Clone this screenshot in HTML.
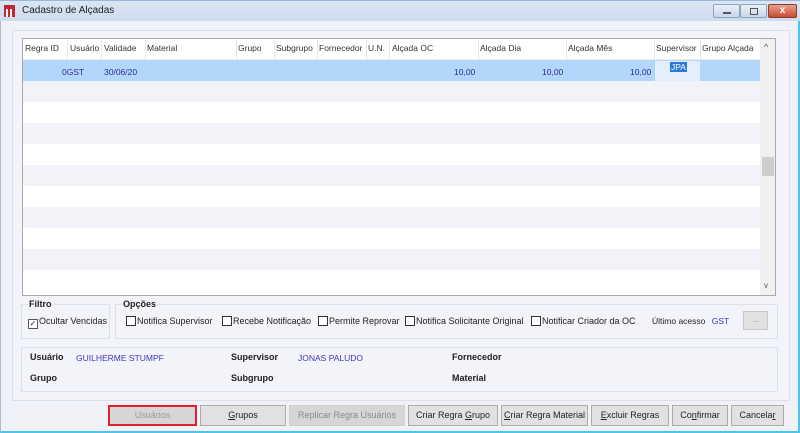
<!DOCTYPE html>
<html><head><meta charset="utf-8"><style>
*{box-sizing:border-box;margin:0;padding:0}
body{width:800px;height:433px;overflow:hidden;background:#f1f2f8;font-family:"Liberation Sans",sans-serif;font-size:9px;color:#222;position:relative}
.abs{position:absolute}
#title{left:0;top:0;width:800px;height:21px;background:linear-gradient(#dbe6f3,#cddbee);border-top:1px solid #9fb6d3}
#win{left:0;top:21px;width:800px;height:412px;border-right:2px solid #4fc3e8;border-bottom:2px solid #4fc3e8;border-left:1px solid #a8bcd6}
.panel{border:1px solid #dde0e8;background:#f3f4f9}
#grid{left:22px;top:38px;width:754px;height:258px;background:#fff;border:1px solid #a9a9a9;overflow:hidden}
.hd{position:absolute;top:4px;font-size:8.5px;color:#333}
.vs{position:absolute;top:0;height:21px;width:1px;background:#e6e6e6}
.row{position:absolute;left:0;width:738px;height:21px}
.t{position:absolute;font-size:8.5px}
.btn{position:absolute;top:405px;height:21px;background:#e1e1e1;border:1px solid #adadad;text-align:center;line-height:19px;font-size:9px;color:#222}
.cb{display:inline-block;width:10px;height:10px;border:1px solid #333;background:#fff;vertical-align:-2px;margin-right:1px}
.lb{position:absolute;font-weight:bold;font-size:9px}
.bl{position:absolute;color:#3a3ac0;font-size:8.5px}
</style></head><body>
<div id="title" class="abs">
 <div class="abs" style="left:4px;top:4px;width:11px;height:12px;background:#c0262d"></div>
 <div class="abs" style="left:6px;top:8px;width:2px;height:8px;background:#fff"></div>
 <div class="abs" style="left:10px;top:8px;width:2px;height:8px;background:#fff"></div>
 <div class="abs" style="left:22px;top:4px;font-size:10px;color:#222">Cadastro de Alçadas</div>
 <div class="abs" style="left:713px;top:3px;width:27px;height:14px;border:1px solid #8ea3c0;border-radius:2px;background:linear-gradient(#eaf0f8,#c9d6e8)"><div class="abs" style="left:9px;top:7px;width:8px;height:2px;background:#555"></div></div>
 <div class="abs" style="left:740px;top:3px;width:27px;height:14px;border:1px solid #8ea3c0;border-radius:2px;background:linear-gradient(#eaf0f8,#c9d6e8)"><div class="abs" style="left:9px;top:3px;width:8px;height:7px;border:1px solid #555"></div></div>
 <div class="abs" style="left:768px;top:3px;width:29px;height:14px;border:1px solid #8a3b2d;border-radius:2px;background:linear-gradient(#e9a08e,#c74c32);color:#fff;font-weight:bold;text-align:center;line-height:12px;font-size:10px">x</div>
</div>
<div id="win" class="abs"></div>
<div class="abs panel" style="left:12px;top:30px;width:778px;height:371px;background:#f3f4f9"></div>
<div id="grid" class="abs">
 <div class="row" style="top:0;background:#fff;border-bottom:1px solid #eee"></div>
 <div class="hd" style="left:2px">Regra ID</div>
 <div class="hd" style="left:47px">Usuário</div>
 <div class="hd" style="left:81px">Validade</div>
 <div class="hd" style="left:124px">Material</div>
 <div class="hd" style="left:215px">Grupo</div>
 <div class="hd" style="left:253px">Subgrupo</div>
 <div class="hd" style="left:296px">Fornecedor</div>
 <div class="hd" style="left:345px">U.N.</div>
 <div class="hd" style="left:369px">Alçada OC</div>
 <div class="hd" style="left:457px">Alçada Dia</div>
 <div class="hd" style="left:545px">Alçada Mês</div>
 <div class="hd" style="left:633px">Supervisor</div>
 <div class="hd" style="left:679px">Grupo Alçada</div>
 <div class="vs" style="left:44px"></div><div class="vs" style="left:78px"></div><div class="vs" style="left:122px"></div><div class="vs" style="left:213px"></div><div class="vs" style="left:251px"></div><div class="vs" style="left:294px"></div><div class="vs" style="left:343px"></div><div class="vs" style="left:366px"></div><div class="vs" style="left:455px"></div><div class="vs" style="left:543px"></div><div class="vs" style="left:631px"></div><div class="vs" style="left:677px"></div><div class="vs" style="left:737px"></div>
 <div class="row" style="top:21px;background:#b3d7fb"></div>
 <div class="abs" style="left:632px;top:22px;width:45px;height:20px;background:#e3effb"></div>
 <div class="t" style="left:39px;top:28px;color:#2a2a9a">0GST</div>
 <div class="t" style="left:81px;top:28px;color:#2a2a9a">30/06/20</div>
 <div class="t" style="left:431px;top:28px;color:#2a2a9a">10,00</div>
 <div class="t" style="left:519px;top:28px;color:#2a2a9a">10,00</div>
 <div class="t" style="left:607px;top:28px;color:#2a2a9a">10,00</div>
 <div class="t" style="left:647px;top:23px;background:#2a7ad8;color:#fff;padding:0 1px">JPA</div>
 <div class="row" style="top:42px;background:#f2f3f8"></div>
 <div class="row" style="top:84px;background:#f2f3f8"></div>
 <div class="row" style="top:126px;background:#f2f3f8"></div>
 <div class="row" style="top:168px;background:#f2f3f8"></div>
 <div class="row" style="top:210px;background:#f2f3f8"></div>
 <div class="abs" style="left:737px;top:0;width:16px;height:258px;background:#f0f0f0"></div>
 <div class="abs" style="left:741px;top:3px;font-size:9px;color:#555">^</div>
 <div class="abs" style="left:739px;top:118px;width:12px;height:19px;background:#cdcdcd"></div>
 <div class="abs" style="left:741px;top:242px;font-size:8px;color:#555">v</div>
</div>
<div class="abs panel" style="left:21px;top:304px;width:89px;height:35px"></div>
<div class="abs" style="left:28px;top:299px;font-weight:bold;font-size:9px;background:#f3f4f9;padding:0 1px">Filtro</div>
<div class="abs" style="left:28px;top:316px;font-size:9px"><span class="cb" style="border-color:#555;font-size:8px;line-height:8px;text-align:center">✓</span>Ocultar Vencidas</div>
<div class="abs panel" style="left:115px;top:304px;width:663px;height:35px"></div>
<div class="abs" style="left:122px;top:299px;font-weight:bold;font-size:9px;background:#f3f4f9;padding:0 1px">Opções</div>
<div class="abs" style="left:126px;top:316px;font-size:9px"><span class="cb"></span>Notifica Supervisor</div>
<div class="abs" style="left:222px;top:316px;font-size:9px"><span class="cb"></span>Recebe Notificação</div>
<div class="abs" style="left:318px;top:316px;font-size:9px"><span class="cb"></span>Permite Reprovar</div>
<div class="abs" style="left:405px;top:316px;font-size:9px"><span class="cb"></span>Notifica Solicitante Original</div>
<div class="abs" style="left:531px;top:316px;font-size:9px"><span class="cb"></span>Notificar Criador da OC</div>
<div class="abs" style="left:652px;top:316px;font-size:8.5px">Último acesso <span style="color:#3a3ac0;margin-left:4px">GST</span></div>
<div class="abs" style="left:743px;top:311px;width:25px;height:19px;background:#e1e1e1;border:1px solid #c8c8c8;text-align:center;color:#999;font-size:8px;line-height:16px">...</div>
<div class="abs panel" style="left:21px;top:347px;width:757px;height:45px"></div>
<div class="lb" style="left:30px;top:352px">Usuário</div><div class="bl" style="left:76px;top:353px">GUILHERME STUMPF</div>
<div class="lb" style="left:30px;top:373px">Grupo</div>
<div class="lb" style="left:231px;top:352px">Supervisor</div><div class="bl" style="left:298px;top:353px">JONAS PALUDO</div>
<div class="lb" style="left:231px;top:373px">Subgrupo</div>
<div class="lb" style="left:452px;top:352px">Fornecedor</div>
<div class="lb" style="left:452px;top:373px">Material</div>
<div class="btn" style="left:108px;width:89px;border:2px solid #e0202a;background:#d6d6d6;color:#999;line-height:17px;top:405px">Usuários</div>
<div class="btn" style="left:200px;width:86px"><u>G</u>rupos</div>
<div class="btn" style="left:289px;width:116px;background:#d6d6d6;border-color:#d0d0d0;color:#8a8a8a">Replicar Regra Usuários</div>
<div class="btn" style="left:408px;width:90px">Criar Regra <u>G</u>rupo</div>
<div class="btn" style="left:501px;width:87px"><u>C</u>riar Regra Material</div>
<div class="btn" style="left:591px;width:78px"><u>E</u>xcluir Regras</div>
<div class="btn" style="left:672px;width:56px">Co<u>n</u>firmar</div>
<div class="btn" style="left:731px;width:53px">Cancela<u>r</u></div>
</body></html>
